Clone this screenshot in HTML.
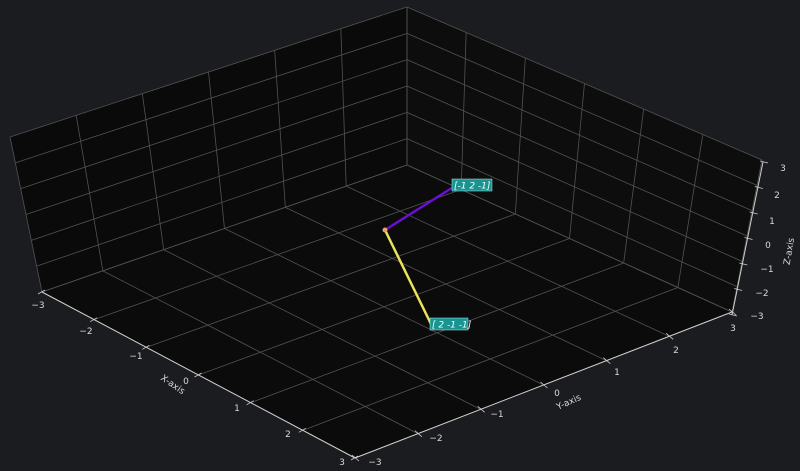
<!DOCTYPE html>
<html><head><meta charset="utf-8"><style>
html,body{margin:0;padding:0;background:#1b1c1f;width:800px;height:471px;overflow:hidden}
svg{display:block}
text{font-family:"DejaVu Sans","Liberation Sans",sans-serif;font-size:9px;fill:#d8d8d8}
</style></head><body>
<svg id="s" width="800" height="471" viewBox="0 0 800 471" xmlns="http://www.w3.org/2000/svg">
<rect width="800" height="471" fill="#1b1c1f"/>
<polygon points="42,292 407,165 407,7 10,137" fill="#0a0a0a"/>
<polygon points="407,165 732,312 762,160 407,7" fill="#0d0d0d"/>
<polygon points="42,292 355,458 732,312 407,165" fill="#0b0b0b"/>
<g id="grid" stroke="#525252" stroke-width="0.8" fill="none"></g>
<g stroke="#cfcfcf" stroke-width="1" fill="none">
<line x1="42" y1="292" x2="355" y2="458"/>
<line x1="355" y1="458" x2="732" y2="312"/>
<line x1="763" y1="162" x2="732" y2="315"/>
</g>
<g id="ticks" stroke="#cfcfcf" stroke-width="0.8"></g>
<g id="labels"></g>
<line x1="385" y1="230" x2="455" y2="186" stroke="#6a0fd6" stroke-width="2.5"/>
<line x1="385" y1="230" x2="431" y2="324" stroke="#e8e35a" stroke-width="2.5"/>
<circle cx="385" cy="230" r="2.5" fill="#f0a060"/>
<rect x="452" y="179" width="40" height="12" fill="#1a9490" stroke="#aee" stroke-width="0.5"/>
<text x="454" y="188.5" style="font-style:italic;fill:#fff">[-1  2 -1]</text>
<rect x="430" y="318" width="38" height="12" fill="#1a9490" stroke="#aee" stroke-width="0.5"/>
<text x="432" y="327.5" style="font-style:italic;fill:#fff">[ 2 -1 -1]</text>
<text x="158" y="386" transform="rotate(35 170 386)">X-axis</text>
<text x="555" y="405" transform="rotate(-24 568 400)">Y-axis</text>
<text x="770" y="248" transform="rotate(-80 790 245)">Z-axis</text>
</svg>
<script>
function bl(q,u,v){return[q[0][0]*(1-u)*(1-v)+q[1][0]*u*(1-v)+q[2][0]*u*v+q[3][0]*(1-u)*v,
q[0][1]*(1-u)*(1-v)+q[1][1]*u*(1-v)+q[2][1]*u*v+q[3][1]*(1-u)*v];}
var g=document.getElementById('grid'),ns='http://www.w3.org/2000/svg';
function ln(a,b,p){var l=document.createElementNS(ns,'line');l.setAttribute('x1',a[0]);l.setAttribute('y1',a[1]);l.setAttribute('x2',b[0]);l.setAttribute('y2',b[1]);(p||g).appendChild(l);}
var quads=[
[[42,292],[355,458],[732,312],[407,165]],
[[42,292],[407,165],[407,7],[10,137]],
[[407,165],[732,312],[762,160],[407,7]]];
quads.forEach(function(q){for(var i=0;i<7;i++){var t=i/6;ln(bl(q,t,0),bl(q,t,1));ln(bl(q,0,t),bl(q,1,t));}});
var tk=document.getElementById('ticks'),lb=document.getElementById('labels');
function tx(x,y,s){var e=document.createElementNS(ns,'text');e.setAttribute('x',x);e.setAttribute('y',y+3);e.setAttribute('text-anchor','middle');e.textContent=s;lb.appendChild(e);}
var nums=['\u22123','\u22122','\u22121','0','1','2','3'];
var XL=[[38,305],[86,331],[136,356],[186,381],[237,408],[288,434],[342,462]];
var YL=[[375,462],[436,438],[497,414],[557,393],[617,372],[676,350],[733,328]];
var ZL=[[757,316],[762,293],[767,269],[768,245],[772,221],[777,195],[783,168]];
for(var i=0;i<7;i++){var t=i/6;
var p=[42+(355-42)*t,292+(458-292)*t];ln([p[0]-4,p[1]+2],[p[0]+3,p[1]-2],tk);tx(XL[i][0],XL[i][1],nums[i]);
var q=[355+(732-355)*t,458+(312-458)*t];ln([q[0]-3,q[1]-3],[q[0]+4,q[1]+3],tk);tx(YL[i][0],YL[i][1],nums[i]);
var z=[732+(763-732)*t,315+(162-315)*t];ln([z[0]-3,z[1]-1],[z[0]+5,z[1]+1],tk);tx(ZL[i][0],ZL[i][1],nums[i]);}
</script>
</body></html>
